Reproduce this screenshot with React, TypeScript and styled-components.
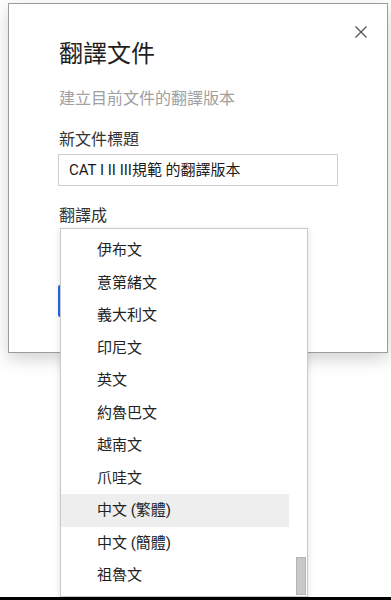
import React from 'react';
import styled, { createGlobalStyle } from 'styled-components';

const FONT = `Roboto, Arial, "Noto Sans CJK TC", sans-serif`;

const LANGUAGES = [
    '伊布文',
    '意第緒文',
    '義大利文',
    '印尼文',
    '英文',
    '約魯巴文',
    '越南文',
    '爪哇文',
    '中文 (繁體)',
    '中文 (簡體)',
    '祖魯文',
];

const SELECTED = '中文 (繁體)';

const GlobalStyle = createGlobalStyle`
    html, body {
        margin: 0;
        padding: 0;
        background: #ffffff;
    }

    body {
        font-family: ${FONT};
        color: #222222;
    }
`;

export default function App() {
    return (
        <>
            <GlobalStyle />
            <PageElement>
                <DialogElement>
                    <CloseButtonElement aria-label="關閉">
                        <svg width="12" height="12" viewBox="0 0 12 12">
                            <path d="M0.5 0.5 L11.5 11.5 M11.5 0.5 L0.5 11.5" stroke="#555" strokeWidth="1.3" fill="none" />
                        </svg>
                    </CloseButtonElement>

                    <TitleElement>翻譯文件</TitleElement>
                    <SubtitleElement>建立目前文件的翻譯版本</SubtitleElement>

                    <FieldLabelElement>新文件標題</FieldLabelElement>
                    <TextInputElement>CAT I II III規範 的翻譯版本</TextInputElement>

                    <FieldLabelElement>翻譯成</FieldLabelElement>
                    {/* hidden under the open menu, only its left edge shows */}
                    <PrimaryButtonElement aria-label="翻譯" />

                    <MenuElement>
                        <MenuListElement>
                            {LANGUAGES.map(language => (
                                <MenuItemElement key={language} isActive={language === SELECTED}>
                                    {language}
                                </MenuItemElement>
                            ))}
                        </MenuListElement>
                        <ScrollTrackElement>
                            <ScrollThumbElement />
                        </ScrollTrackElement>
                    </MenuElement>
                </DialogElement>
                <BottomBarElement />
            </PageElement>
        </>
    );
}

const PageElement = styled.div`
    display: flex;
    flex-direction: column;
    width: 391px;
    height: 600px;
    overflow: hidden;
`;

const DialogElement = styled.div`
    position: relative;
    box-sizing: border-box;
    width: 380px;
    height: 350px;
    margin: 3px 0 0 8px;
    padding: 35px 0 0 49px;
    background: #ffffff;
    border: 1px solid #9c9c9c;
    box-shadow: 0 6px 16px rgba(0, 0, 0, 0.18);
    display: flex;
    flex-direction: column;
`;

const CloseButtonElement = styled.div`
    position: absolute;
    top: 22px;
    right: 20px;
    width: 12px;
    height: 12px;
    display: flex;
`;

const TitleElement = styled.div`
    font-size: 24px;
    line-height: 30px;
    color: #1f1f1f;
    padding-left: 1px;
`;

const SubtitleElement = styled.div`
    margin-top: 19px;
    font-size: 16px;
    line-height: 22px;
    color: #a0a0a0;
    padding-left: 1px;
`;

const FieldLabelElement = styled.div`
    margin-top: 19px;
    font-size: 16px;
    line-height: 22px;
    color: #333333;
    padding-left: 1px;
`;

const TextInputElement = styled.div`
    box-sizing: border-box;
    margin-top: 3px;
    width: 280px;
    height: 32px;
    padding: 0 10px;
    border: 1px solid #cfcfcf;
    font-size: 15px;
    line-height: 30px;
    color: #1a1a1a;
    white-space: nowrap;
`;

const PrimaryButtonElement = styled.div`
    margin-top: 58px;
    width: 80px;
    height: 32px;
    border-radius: 2px;
    background: #2368f0;
`;

const MenuElement = styled.div`
    position: absolute;
    left: 51px;
    top: 224px;
    box-sizing: border-box;
    width: 248px;
    height: 369px;
    display: flex;
    background: #ffffff;
    border: 1px solid #c9c9c9;
    box-shadow: 0 2px 6px rgba(0, 0, 0, 0.15);
`;

const MenuListElement = styled.div`
    width: 228px;
    padding-top: 5px;
    overflow: hidden;
`;

interface MenuItemElementProps {
    isActive: boolean;
}

const MenuItemElement = styled.div<MenuItemElementProps>`
    height: 32.5px;
    padding-left: 36px;
    font-size: 15px;
    line-height: 32.5px;
    color: #222222;
    white-space: nowrap;

    ${props => props.isActive && 'background: #eeeeee;'}
`;

const ScrollTrackElement = styled.div`
    position: relative;
    width: 10px;
    margin-left: 7px;
`;

const ScrollThumbElement = styled.div`
    position: absolute;
    left: 0;
    top: 328px;
    box-sizing: border-box;
    width: 10px;
    height: 38px;
    background: #c8c8c8;
    border: 1px solid #b4b4b4;
`;

const BottomBarElement = styled.div`
    margin-top: auto;
    height: 3px;
    background: #000000;
`;
